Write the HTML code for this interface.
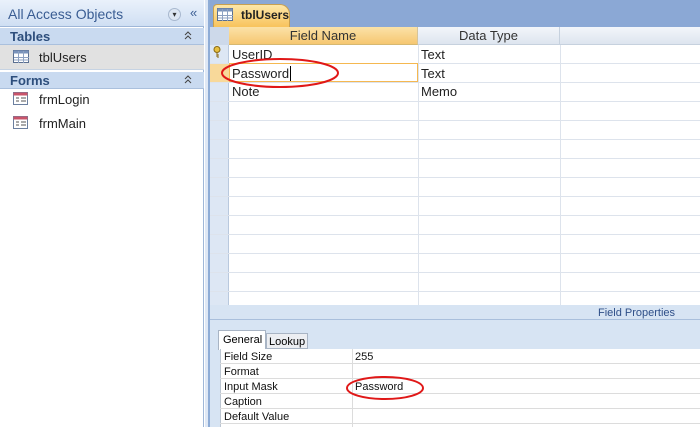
<!DOCTYPE html>
<html><head><style>
*{margin:0;padding:0;box-sizing:border-box}
body{width:700px;height:427px;overflow:hidden;background:#fff;font-family:"Liberation Sans",sans-serif;position:relative}
.a{position:absolute}
.t{font-size:13px;color:#222}
.s{font-size:11px;color:#111}
</style></head><body>
<div class="a" style="left:0;top:0;width:204px;height:427px;background:#fff;border-right:1px solid #9fb7d8"></div>
<div class="a" style="left:0;top:0;width:204px;height:27px;background:linear-gradient(#eaf1fb,#cfdff3);border-bottom:1px solid #9fb7d8"></div>
<div class="a" style="left:8px;top:6px;font-size:14px;color:#3a5d93">All Access Objects</div>
<div class="a" style="left:168px;top:8px;width:13px;height:13px;border-radius:50%;background:#dde6f2;border:1px solid #a8b8cf;font-size:8px;color:#333;text-align:center;line-height:11px">▾</div>
<div class="a" style="left:190px;top:5px;font-size:13px;color:#3a5d93">«</div>
<div class="a" style="left:0;top:28px;width:204px;height:17px;background:#c9daf0;border-bottom:1px solid #aac0dd"></div>
<div class="a" style="left:10px;top:29px;font-size:13px;font-weight:bold;color:#2d4e7c">Tables</div>
<svg class="a" style="left:184px;top:31px" width="8" height="10"><path d="M1 4l3-3 3 3M1 8l3-3 3 3" stroke="#444" fill="none"/></svg>
<div class="a" style="left:0;top:45px;width:204px;height:25px;background:#e1e1e1;border-bottom:1px solid #c6d3e3"></div>
<svg class="a" style="left:13px;top:50px" width="16" height="13"><rect x=".5" y=".5" width="15" height="12" fill="#fff" stroke="#5a6f90"/><rect x=".5" y=".5" width="15" height="3" fill="#7a93bb"/><path d="M5.5 1v12M10.5 1v12M1 7.5h15M1 10h15" stroke="#8ea2c2"/></svg>
<div class="a t" style="left:39px;top:50px">tblUsers</div>
<div class="a" style="left:0;top:72px;width:204px;height:17px;background:#c9daf0;border-bottom:1px solid #aac0dd"></div>
<div class="a" style="left:10px;top:73px;font-size:13px;font-weight:bold;color:#2d4e7c">Forms</div>
<svg class="a" style="left:184px;top:75px" width="8" height="10"><path d="M1 4l3-3 3 3M1 8l3-3 3 3" stroke="#444" fill="none"/></svg>
<svg class="a" style="left:13px;top:92px" width="15" height="13"><rect x=".5" y=".5" width="14" height="12" fill="#fff" stroke="#6b7f9f"/><rect x=".5" y=".5" width="14" height="3" fill="#c9546a"/><path d="M3 6h3M3 9h3M8 6h5M8 9h5" stroke="#555"/></svg>
<div class="a t" style="left:39px;top:92px">frmLogin</div>
<svg class="a" style="left:13px;top:116px" width="15" height="13"><rect x=".5" y=".5" width="14" height="12" fill="#fff" stroke="#6b7f9f"/><rect x=".5" y=".5" width="14" height="3" fill="#c9546a"/><path d="M3 6h3M3 9h3M8 6h5M8 9h5" stroke="#555"/></svg>
<div class="a t" style="left:39px;top:116px">frmMain</div>
<div class="a" style="left:205px;top:0;width:5px;height:427px;background:#dfe8f5;border-right:2px solid #8eacd6"></div>
<div class="a" style="left:210px;top:0;width:490px;height:27px;background:#8ba8d5"></div>
<div class="a" style="left:213px;top:4px;width:77px;height:23px;background:linear-gradient(#fde7a8,#f8c35c);border:1px solid #c8a050;border-bottom:none;border-radius:4px 10px 0 0"></div>
<svg class="a" style="left:217px;top:8px" width="16" height="13"><rect x=".5" y=".5" width="15" height="12" fill="#fff" stroke="#5a6f90"/><rect x=".5" y=".5" width="15" height="3" fill="#7a93bb"/><path d="M5.5 1v12M10.5 1v12M1 7.5h15M1 10h15" stroke="#8ea2c2"/></svg>
<div class="a" style="left:241px;top:8px;font-size:12px;font-weight:bold;color:#222">tblUsers</div>
<div class="a" style="left:210px;top:27px;width:490px;height:278px;background:#fff"></div>
<div class="a" style="left:210px;top:27px;width:19px;height:278px;background:#dde7f4;border-right:1px solid #b9c9de"></div>
<div class="a" style="left:210px;top:27px;width:19px;height:18px;background:#cdd9ea"></div>
<div class="a" style="left:229px;top:27px;width:189px;height:18px;background:linear-gradient(#fbe2a8,#f6c771);border-right:1px solid #d5c49b;border-bottom:1px solid #d6b872;text-align:center;font-size:13px;color:#333;line-height:18px">Field Name</div>
<div class="a" style="left:418px;top:27px;width:142px;height:18px;background:linear-gradient(#f3f6fa,#dde5ef);border-right:1px solid #c6d1de;border-bottom:1px solid #c6d1de;text-align:center;font-size:13px;color:#333;line-height:18px">Data Type</div>
<div class="a" style="left:560px;top:27px;width:140px;height:18px;background:linear-gradient(#f3f6fa,#dde5ef);border-bottom:1px solid #c6d1de"></div>
<svg class="a" style="left:210px;top:45px" width="490" height="260">
<g stroke="#dde3ec">
<path d="M0 18.5h490M0 37.5h490M0 56.5h490M0 75.5h490M0 94.5h490M0 113.5h490M0 132.5h490M0 151.5h490M0 170.5h490M0 189.5h490M0 208.5h490M0 227.5h490M0 246.5h490"/>
<path d="M208.5 0v260M350.5 0v260"/>
</g>
<rect x="0" y="19" width="19" height="18" fill="#f8d99a"/>
<rect x="19.5" y="18.5" width="188" height="18" fill="none" stroke="#f5b850"/>
</svg>
<svg class="a" style="left:212px;top:46px" width="10" height="12"><circle cx="5" cy="3.5" r="3" fill="#e8c040" stroke="#8a6a10"/><path d="M5 6v5M5 9h2M5 11h2" stroke="#8a6a10"/></svg>
<div class="a t" style="left:232px;top:47px">UserID</div>
<div class="a t" style="left:232px;top:66px">Password<span style="border-left:1px solid #000;margin-left:1px"></span></div>
<div class="a t" style="left:232px;top:84px">Note</div>
<div class="a t" style="left:421px;top:47px">Text</div>
<div class="a t" style="left:421px;top:66px">Text</div>
<div class="a t" style="left:421px;top:84px">Memo</div>
<div class="a" style="left:210px;top:305px;width:490px;height:122px;background:#d7e4f3"></div>
<div class="a" style="left:210px;top:319px;width:490px;height:1px;background:#a9bfdc"></div>
<div class="a" style="left:598px;top:307px;font-size:11px;color:#2f4f88">Field Properties</div>
<div class="a" style="left:218px;top:330px;width:48px;height:20px;background:#fff;border:1px solid #a8b4c4;border-bottom:none;font-size:11px;padding:3px 0 0 4px">General</div>
<div class="a" style="left:266px;top:333px;width:42px;height:16px;background:#eceef2;border:1px solid #a8b4c4;font-size:11px;padding:2px 0 0 2px">Lookup</div>
<div class="a" style="left:220px;top:349px;width:480px;height:78px;background:#fff;border-left:1px solid #bcc6d2"></div>
<svg class="a" style="left:220px;top:349px" width="480" height="78"><g stroke="#dcdcdc"><path d="M0 14.5h480M0 29.5h480M0 44.5h480M0 59.5h480M0 74.5h480M132.5 0v78"/></g></svg>
<div class="a s" style="left:224px;top:351px">Field Size</div>
<div class="a s" style="left:224px;top:366px">Format</div>
<div class="a s" style="left:224px;top:381px">Input Mask</div>
<div class="a s" style="left:224px;top:396px">Caption</div>
<div class="a s" style="left:224px;top:411px">Default Value</div>
<div class="a s" style="left:355px;top:351px">255</div>
<div class="a s" style="left:355px;top:381px">Password</div>
<svg class="a" style="left:0;top:0" width="700" height="427"><ellipse cx="280" cy="73" rx="58" ry="14" fill="none" stroke="#e01818" stroke-width="2"/><ellipse cx="385" cy="388" rx="38" ry="11" fill="none" stroke="#e01818" stroke-width="2"/></svg>
</body></html>
